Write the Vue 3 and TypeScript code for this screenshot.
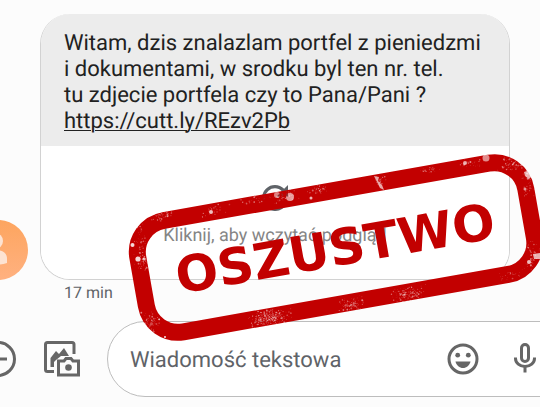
<script setup lang="ts">
interface Speck {
  x: number
  y: number
  r: number
  o: number
}

// Worn-ink areas of the stamp: centre, spread along the edge, spread across it, amount
const worn: [number, number, number, number, number][] = [
  [163, 215, 14, 6, 55],
  [212, 211, 16, 6, 26],
  [250, 201, 26, 5, 24],
  [284, 196, 20, 7, 55],
  [318, 190, 14, 6, 34],
  [140, 247, 8, 26, 60],
  [144, 262, 8, 12, 40],
  [152, 322, 12, 14, 70],
  [268, 318, 26, 9, 300],
  [352, 304, 17, 8, 100],
  [408, 294, 20, 8, 140],
  [380, 180, 8, 7, 22],
  [430, 169, 14, 5, 20],
  [472, 163, 16, 6, 30],
  [512, 164, 20, 9, 90],
  [528, 184, 9, 16, 40],
  [532, 256, 9, 18, 50],
  [512, 274, 16, 7, 24],
]

const spots: Speck[] = [
  { x: 211, y: 212, r: 2, o: 0.75 },
  { x: 277, y: 195, r: 3, o: 0.5 },
  { x: 290, y: 197, r: 4, o: 0.6 },
  { x: 311, y: 198, r: 1.5, o: 0.7 },
  { x: 132.5, y: 245, r: 2, o: 0.85 },
  { x: 138, y: 259, r: 2.6, o: 0.85 },
  { x: 144, y: 259, r: 1.6, o: 0.7 },
  { x: 165, y: 337, r: 1, o: 0.9 },
  { x: 465, y: 163, r: 2, o: 0.65 },
  { x: 486, y: 158, r: 3.5, o: 0.55 },
  { x: 525, y: 189, r: 1.5, o: 0.6 },
  { x: 529, y: 262, r: 2, o: 0.75 },
]

let seed = 17
function random(): number {
  seed = (seed * 16807) % 2147483647
  return seed / 2147483647
}

const specks: Speck[] = worn.flatMap(([cx, cy, sx, sy, count]) =>
  Array.from({ length: count }, () => {
    const dx = (random() + random() + random() - 1.5) / 1.5
    const dy = (random() + random() - 1) * sy
    return {
      x: cx + dx * sx,
      y: cy + dy - dx * Math.min(sx, 30) * 0.17,
      r: 0.25 + random() * random() * 0.8,
      o: 0.2 + random() * 0.35,
    }
  }),
).concat(spots)
</script>

<template>
  <main class="screen">
    <section class="conversation">
      <div class="avatar">
        <svg viewBox="0 0 60 60" aria-hidden="true">
          <circle cx="27" cy="21" r="8" />
          <path d="M11 43v-4c0-6 8-9 16-9s12 3 12 9v4q-14 4-28 0z" />
        </svg>
      </div>
      <div class="message">
        <article class="bubble">
          <p class="text">
            Witam, dzis znalazlam portfel z pieniedzmi<br />
            i dokumentami, w srodku byl ten nr. tel.<br />
            tu zdjecie portfela czy to Pana/Pani ?<br />
            <a href="https://cutt.ly/REzv2Pb">https://cutt.ly/REzv2Pb</a>
          </p>
          <button type="button" class="preview">
            <svg viewBox="4 4 16 16" aria-hidden="true">
              <path d="M17.65 6.35A7.96 7.96 0 0 0 12 4a8 8 0 1 0 7.73 10h-2.08A6 6 0 1 1 12 6c1.66 0 3.14.69 4.22 1.78L13 11h7V4z" />
            </svg>
            <span>Kliknij, aby wczytać podgląd</span>
          </button>
        </article>
        <time class="time">17 min</time>
      </div>
    </section>

    <form class="composer" @submit.prevent>
      <button type="button" class="tool add" aria-label="Dodaj">
        <svg viewBox="0 0 36 36" aria-hidden="true">
          <circle cx="18" cy="18" r="16.5" />
          <path d="M10 18h17M18 10v16" />
        </svg>
      </button>
      <button type="button" class="tool gallery" aria-label="Galeria">
        <svg viewBox="0 0 36 36" aria-hidden="true">
          <path class="line" d="M10 30.500H3.500Q1.500 30.500 1.500 28.500V3.500Q1.500 1.500 3.500 1.500H28Q30 1.500 30 3.500V13" />
          <path class="solid" d="M6.500 26V17L12 10l3 3 5-6 5 8h-8l-5 4-2 2v5z" />
          <path class="line" d="M14.500 20H20l2-2.500h5l2 2.500h5.500v14h-20z" />
          <circle class="solid" cx="24.500" cy="26.500" r="3.300" />
        </svg>
      </button>
      <div class="field">
        <input type="text" placeholder="Wiadomość tekstowa" aria-label="Wiadomość tekstowa" />
        <button type="button" class="tool emoji" aria-label="Emotikony">
          <svg viewBox="0 0 32 32" aria-hidden="true">
            <circle class="line" cx="16" cy="16" r="14" />
            <circle class="solid" cx="10.700" cy="12.200" r="2.400" />
            <circle class="solid" cx="21.300" cy="12.200" r="2.400" />
            <path class="solid" d="M8.500 18.500h15C22.500 22.500 19.500 25 16 25s-6.500-2.500-7.500-6.500z" />
          </svg>
        </button>
        <button type="button" class="tool mic" aria-label="Nagraj">
          <svg viewBox="0 0 24 32" aria-hidden="true">
            <rect x="8.500" y="1.500" width="7" height="17" rx="3.500" />
            <path d="M2.500 14.500v1a9.500 8 0 0 0 19 0v-1M12 23.500v6" />
          </svg>
        </button>
      </div>
    </form>

    <svg class="stamp" viewBox="120 145 430 204" role="img" aria-label="OSZUSTWO">
      <defs>
        <mask id="wear" maskUnits="userSpaceOnUse" x="120" y="145" width="430" height="204">
          <rect x="120" y="145" width="430" height="204" fill="#fff" />
          <circle v-for="(s, i) in specks" :key="i" :cx="s.x" :cy="s.y" :r="s.r" :fill-opacity="s.o" />
          <path d="M374 176l5 1-1 4 4 4 2 5-4-2-3-6z" fill-opacity=".65" />
          <path d="M524 172l6-2 3 5-4 4-4-3z" fill-opacity=".7" />
          <path d="M533 254l7-1v6l-6 0z" fill-opacity=".7" />
        </mask>
      </defs>
      <g mask="url(#wear)">
        <rect class="frame" x="139" y="191" width="394" height="113" rx="32" transform="rotate(-10 336 247)" />
      </g>
      <text x="335" y="266" text-anchor="middle" transform="rotate(-10 335 248)">OSZUSTWO</text>
    </svg>
  </main>
</template>

<style>
body {
  margin: 0;
  background: #fcfcfc;
}
</style>

<style scoped>
.screen {
  position: relative;
  min-height: 100vh;
  box-sizing: border-box;
  padding-top: 14px;
  overflow: hidden;
  background: #fcfcfc;
  color: #212121;
  font-family: Roboto, "Noto Sans", sans-serif;
  text-rendering: geometricPrecision;
}

button {
  padding: 0;
  border: 0;
  background: none;
  font: inherit;
  text-rendering: inherit;
}

svg {
  display: block;
}

.conversation {
  display: flex;
  align-items: flex-end;
  gap: 12px;
  padding-right: 30px;
}

.avatar {
  flex: none;
  width: 60px;
  height: 60px;
  margin: 0 0 23px -32px;
  border-radius: 50%;
  background: linear-gradient(#fda55f, #ffb180);
}

.avatar svg {
  fill: #fde3d2;
}

.message {
  flex: 1;
  min-width: 0;
}

.bubble {
  overflow: hidden;
  border: 1px solid #d2d2d2;
  border-top: 0;
  border-radius: 30px;
  background: #fff;
}

.text {
  margin: 0 -1px;
  padding: 17px 24px 11px;
  background: #ececec;
  font-size: 22px;
  line-height: 26px;
}

.text a {
  color: inherit;
  text-decoration-thickness: 1px;
  text-underline-offset: 2px;
}

.preview {
  display: flex;
  flex-direction: column;
  align-items: center;
  gap: 15px;
  width: 100%;
  padding: 39px 0 33px;
  background: #fff;
  color: #858585;
  font-size: 18px;
  line-height: 20px;
}

.preview svg {
  width: 26px;
  height: 26px;
  fill: #5f6368;
}

.time {
  display: block;
  padding: 3px 24px 0;
  color: #5f6368;
  font-size: 16px;
  line-height: 20px;
}

.composer {
  display: flex;
  align-items: center;
  margin: 18px -40px 0 -20px;
}

.tool {
  flex: none;
  color: #666;
}

.tool svg {
  fill: none;
  stroke: currentColor;
  stroke-width: 3;
  width: 100%;
}

.tool .solid {
  fill: currentColor;
  stroke: none;
}

.add {
  width: 36px;
}

.gallery {
  width: 36px;
  margin: 0 27px 0 28px;
}

.field {
  display: flex;
  flex: 1;
  align-items: center;
  min-width: 0;
  height: 76px;
  box-sizing: border-box;
  padding: 0 42px 0 22px;
  border: 1px solid #bdbdbd;
  border-radius: 38px;
  background: #fff;
}

input {
  flex: 1;
  min-width: 0;
  padding: 3px 0 0;
  border: 0;
  outline: 0;
  background: none;
  color: #212121;
  font: 22px/30px Roboto, "Noto Sans", sans-serif;
  text-rendering: inherit;
}

input::placeholder {
  color: #5f6368;
  opacity: 1;
}

.emoji {
  width: 32px;
  margin-right: 34px;
}

.mic {
  width: 24px;
}

.stamp {
  position: absolute;
  top: 145px;
  left: 120px;
  width: 430px;
  height: 204px;
  pointer-events: none;
}

.stamp .frame {
  fill: none;
  stroke: #c20000;
  stroke-width: 17px;
}

.stamp text {
  fill: #c20000;
  font: bold 50px "DejaVu Sans", sans-serif;
}
</style>
